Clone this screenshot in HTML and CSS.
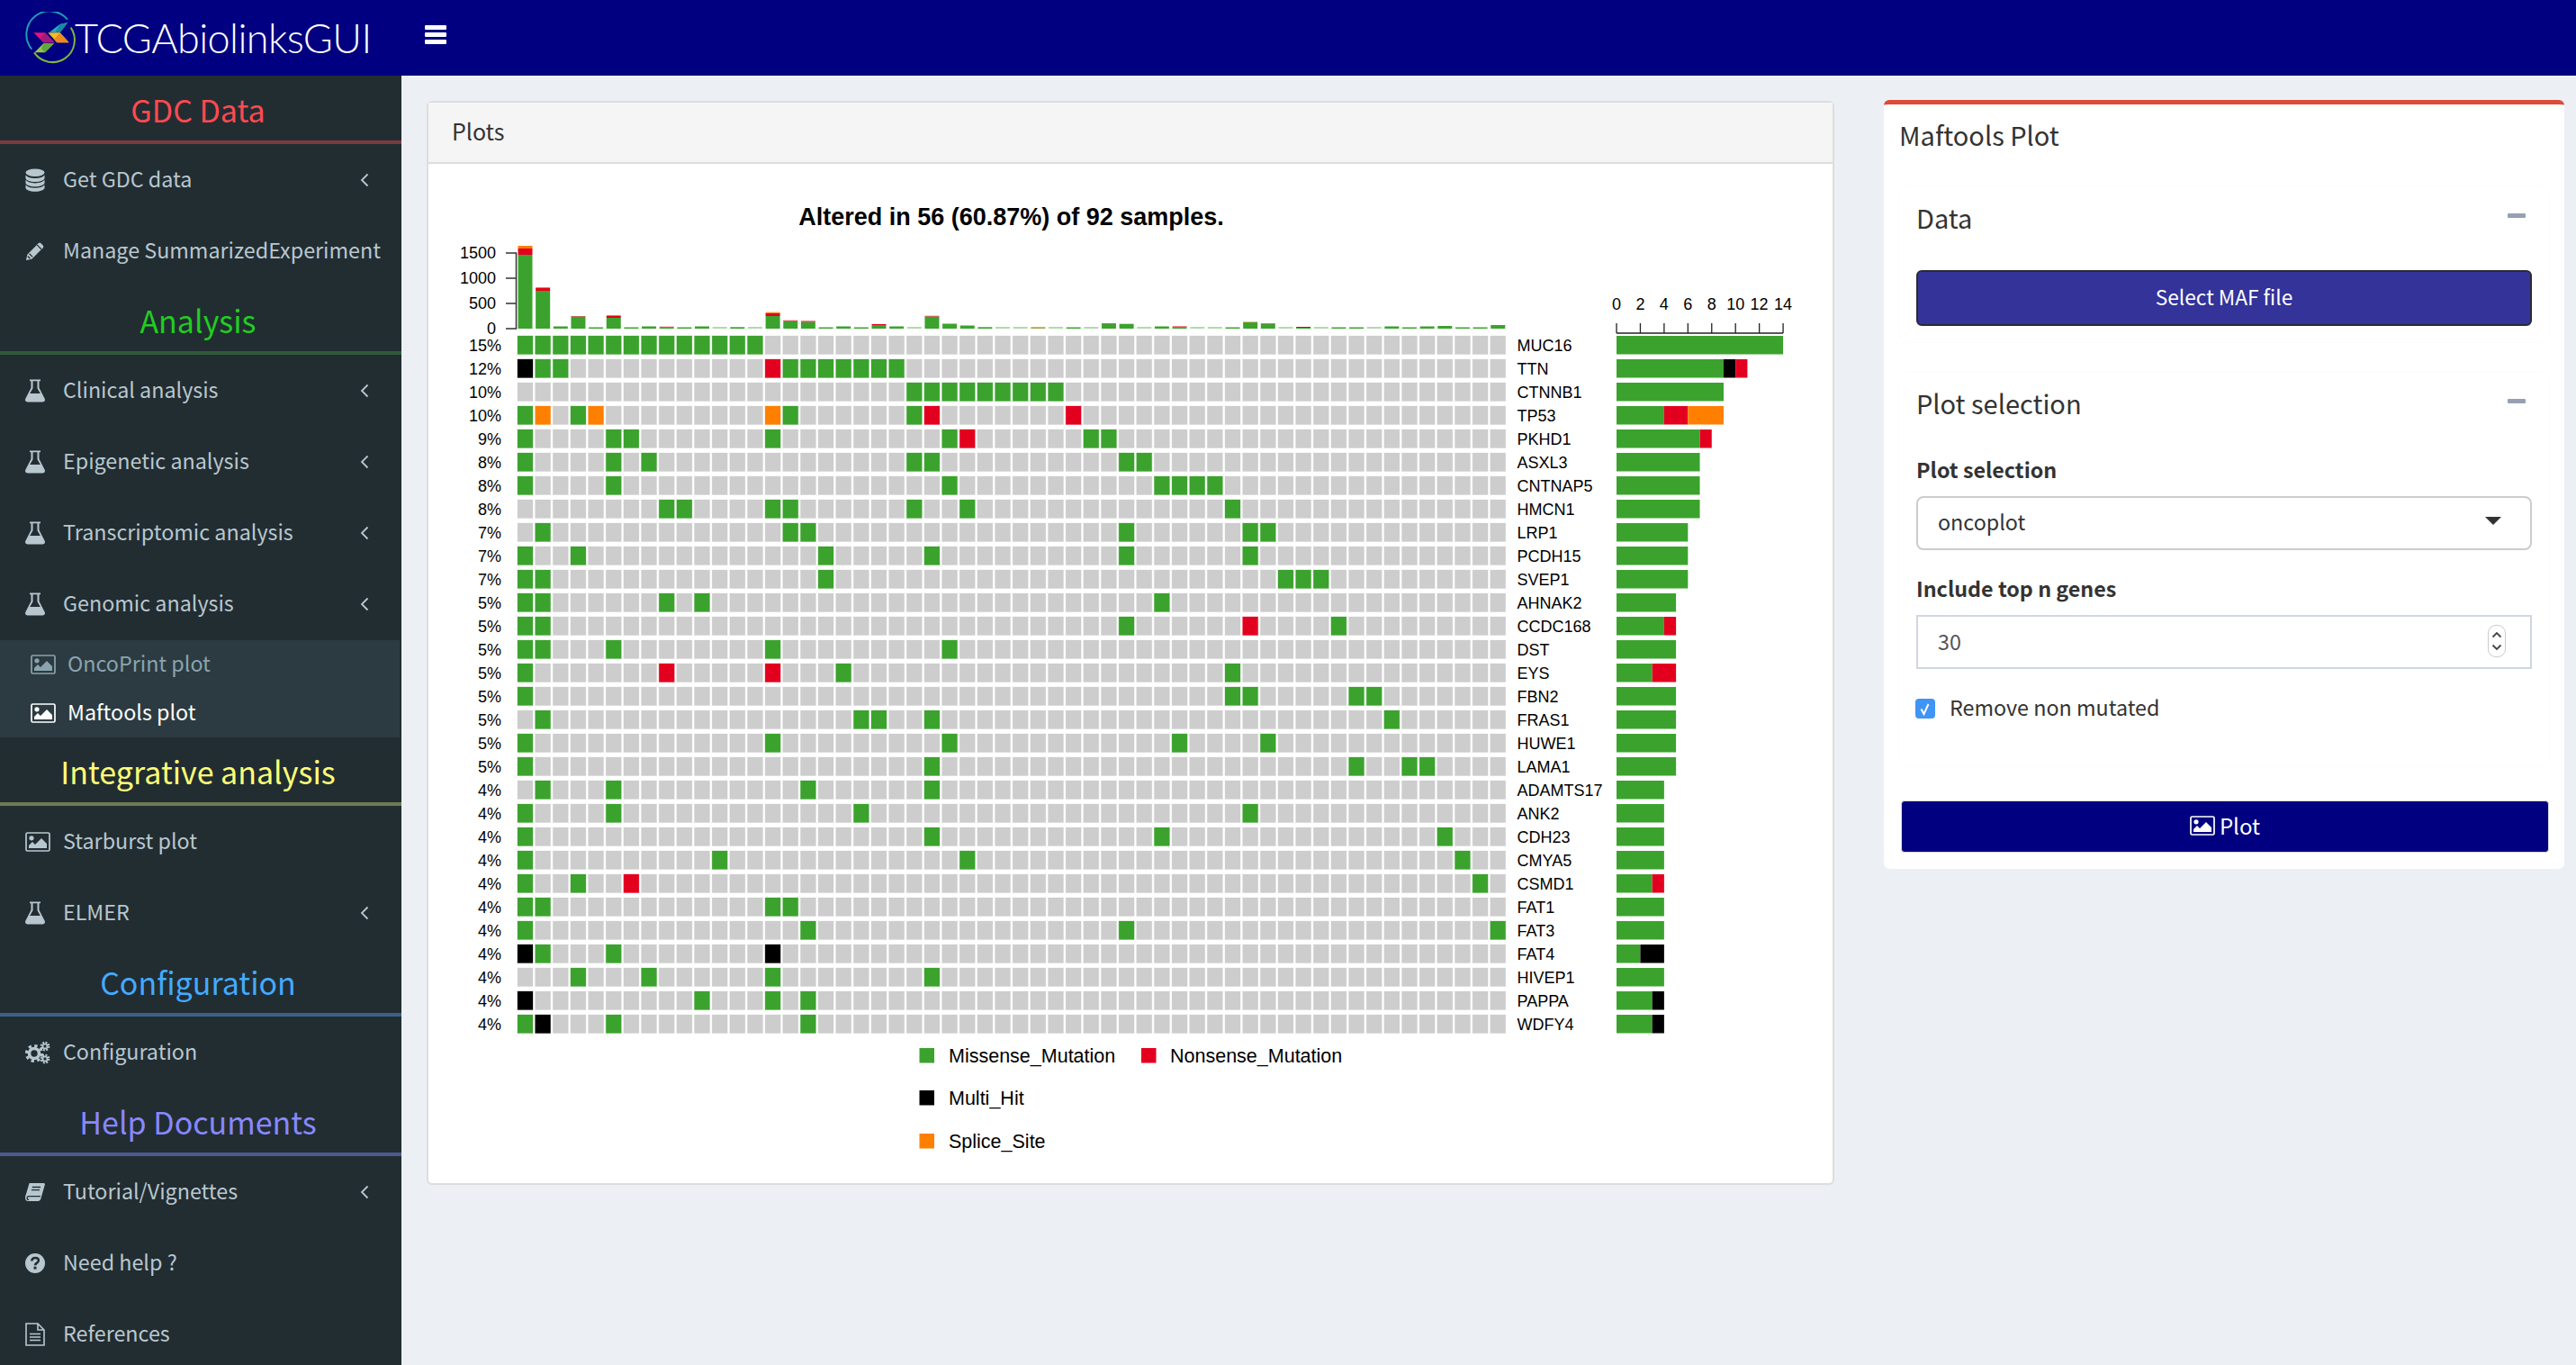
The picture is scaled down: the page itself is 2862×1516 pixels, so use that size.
FILE: index.html
```html
<!DOCTYPE html>
<html lang="en">

<head>
    <meta charset="UTF-8">
    <title>TCGAbiolinksGUI</title>
    <link rel="stylesheet" href="styles.css">
</head>

<body>
    <svg class="defs" width="0" height="0">
        <symbol id="i-database" viewBox="0 0 24 28">
            <ellipse cx="12" cy="5" rx="11.5" ry="4.6" />
            <path id="disc" d="M.5 8v3.6c0 2.5 5 4.6 11.5 4.6s11.5-2.1 11.5-4.6V8c-2 2.6-6.500 3.900-11.500 3.900S2.500 10.600.5 8z" />
            <use href="#disc" y="5.800" />
            <use href="#disc" y="11.600" />
        </symbol>
        <symbol id="i-pencil" viewBox="0 0 24 24">
            <path d="M1 23l1.500-7L16 2.500q1.500-1.500 3 0l2.500 2.500q1.500 1.500 0 3L8 21.500z" />
            <path d="M5 15l4 4M14.500 4.500l5 5M3 18l3 3" fill="none" stroke="#222d32" stroke-width="1.300" />
        </symbol>
        <symbol id="i-flask" viewBox="0 0 22 25">
            <path fill-rule="evenodd" d="M5 0h12v1.800h-1.500v7.400l6.300 12.300q.9 3.100-2.300 3.500H2.500q-3.200-.4-2.300-3.500L6.500 9.200V1.800H5zM8.500 1.800v8L5.200 15.500h11.600L13.500 9.800v-8z" />
        </symbol>
        <symbol id="i-picture" viewBox="0 0 28 22">
            <rect x="1" y="1" width="26" height="20" rx="1.500" fill="none" stroke="currentColor" stroke-width="1.700" />
            <circle cx="7" cy="6.800" r="2.600" />
            <path d="M4 18v-3l4-4 3 3 7-7 6 6v5z" />
        </symbol>
        <symbol id="i-cogs" viewBox="0 0 28 26">
            <g fill="none" stroke="currentColor">
                <circle cx="10" cy="14" r="5.500" stroke-width="3.600" />
                <circle cx="10" cy="14" r="8.600" stroke-width="3" stroke-dasharray="3.400 3.350" />
                <circle cx="22" cy="6" r="2.600" stroke-width="1.900" />
                <circle cx="22" cy="6" r="4.400" stroke-width="2" stroke-dasharray="2 1.450" />
                <circle cx="22" cy="20" r="2.600" stroke-width="1.900" />
                <circle cx="22" cy="20" r="4.400" stroke-width="2" stroke-dasharray="2 1.450" />
            </g>
        </symbol>
        <symbol id="i-book" viewBox="0 0 24 22">
            <path d="M5 0h18l1 1.500L19 19q-.6 3-3 3H3.500Q0 22 0 17.500q0-1 .5-2.500z" />
            <path d="M8.500 5h10M7.500 8.500h10M18.500 16H4.500q-2.200 0-2.200 2.200t2.200 2" fill="none" stroke="#222d32" stroke-width="1.400" />
        </symbol>
        <symbol id="i-help" viewBox="0 0 24 24">
            <circle cx="12" cy="12" r="12" />
            <path d="M8 9.200q0-3.700 4.200-3.700t4 3.300c0 2.800-4.200 2.700-4.200 5.700" fill="none" stroke="#222d32" stroke-width="2.800" />
            <rect x="10.400" y="16" width="3.200" height="3.200" fill="#222d32" />
        </symbol>
        <symbol id="i-file" viewBox="0 0 22 26">
            <g fill="none" stroke="currentColor" stroke-width="1.600">
                <path d="M1 1h13l7 7v17H1zM14 1v7h7" />
                <path d="M5 12.500h12M5 16h12M5 19.500h12" />
            </g>
        </symbol>
        <symbol id="i-angle" viewBox="0 0 10 16">
            <path d="M8.500 1.500L2 8l6.500 6.500" fill="none" stroke="currentColor" stroke-width="1.800" />
        </symbol>
    </svg>

    <header class="topbar">
        <a class="brand">
            <svg class="brand-logo" viewBox="84 42 180 180">
                <path d="M225 68A72 72 0 1 0 106 167" fill="none" stroke="#1f9cb5" stroke-width="6" />
                <path d="M236 95A72 72 0 0 1 114 178" fill="none" stroke="#7fb63e" stroke-width="6" />
                <path d="M165 110l34-26 27-6-26 34z" fill="#2aa9c6" />
                <path d="M199 84l27-6-26 34h-16z" fill="#178a9f" />
                <path d="M160 112h40l30 33h-40z" fill="#f7bd1c" />
                <path d="M200 112l30 33h-40l-10-11z" fill="#ee8a20" />
                <path d="M112 112h38l32 33h-37z" fill="#e4137c" />
                <path d="M150 112l32 33h-37l-12-14z" fill="#a11c7a" />
                <path d="M115 178l30-30h35l-30 30z" fill="#93c64a" />
                <path d="M145 148h35l-30 30-12-13z" fill="#5fa63c" />
            </svg>
            <span class="brand-text">TCGAbiolinksGUI</span>
        </a>
        <div class="burger"><span></span><span></span><span></span></div>
    </header>

    <div class="page">
        <aside class="sidebar">
            <h2 class="side-head head-red">GDC Data</h2>
            <a class="item"><svg class="ico"><use href="#i-database" /></svg>Get GDC data<svg class="angle"><use href="#i-angle" /></svg></a>
            <a class="item"><svg class="ico"><use href="#i-pencil" /></svg>Manage SummarizedExperiment</a>

            <h2 class="side-head head-green">Analysis</h2>
            <a class="item"><svg class="ico"><use href="#i-flask" /></svg>Clinical analysis<svg class="angle"><use href="#i-angle" /></svg></a>
            <a class="item"><svg class="ico"><use href="#i-flask" /></svg>Epigenetic analysis<svg class="angle"><use href="#i-angle" /></svg></a>
            <a class="item"><svg class="ico"><use href="#i-flask" /></svg>Transcriptomic analysis<svg class="angle"><use href="#i-angle" /></svg></a>
            <a class="item"><svg class="ico"><use href="#i-flask" /></svg>Genomic analysis<svg class="angle"><use href="#i-angle" /></svg></a>
            <div class="submenu">
                <a class="subitem"><svg class="ico-pic"><use href="#i-picture" /></svg>OncoPrint plot</a>
                <a class="subitem active"><svg class="ico-pic"><use href="#i-picture" /></svg>Maftools plot</a>
            </div>

            <h2 class="side-head head-yellow">Integrative analysis</h2>
            <a class="item"><svg class="ico ico-wide"><use href="#i-picture" /></svg>Starburst plot</a>
            <a class="item"><svg class="ico"><use href="#i-flask" /></svg>ELMER<svg class="angle"><use href="#i-angle" /></svg></a>

            <h2 class="side-head head-blue">Configuration</h2>
            <a class="item"><svg class="ico ico-wide"><use href="#i-cogs" /></svg>Configuration</a>

            <h2 class="side-head head-violet">Help Documents</h2>
            <a class="item"><svg class="ico"><use href="#i-book" /></svg>Tutorial/Vignettes<svg class="angle"><use href="#i-angle" /></svg></a>
            <a class="item"><svg class="ico"><use href="#i-help" /></svg>Need help ?</a>
            <a class="item"><svg class="ico"><use href="#i-file" /></svg>References</a>
        </aside>

        <main class="content">
            <section class="panel">
                <div class="panel-head">Plots</div>
                <div class="panel-body">
                    <svg id="oncoplot" class="oncoplot" viewBox="476 182 1560 1132"></svg>
                </div>
            </section>

            <section class="box">
                <h3 class="box-title">Maftools Plot</h3>

                <div class="inner">
                    <div class="inner-head"><span>Data</span><i class="minus"></i></div>
                    <button class="btn-file">Select MAF file</button>
                </div>

                <div class="inner inner-form">
                    <div class="inner-head"><span>Plot selection</span><i class="minus"></i></div>

                    <label class="lbl">Plot selection</label>
                    <div class="select">oncoplot<i class="caret"></i></div>

                    <label class="lbl">Include top n genes</label>
                    <div class="number">30
                        <div class="spinner">
                            <svg width="12" height="8" viewBox="0 0 12 8"><path d="M1.500 6.500L6 2l4.500 4.500" /></svg>
                            <svg width="12" height="8" viewBox="0 0 12 8"><path d="M1.500 1.500L6 6l4.500-4.500" /></svg>
                        </div>
                    </div>

                    <div class="check-row">
                        <span class="check"><svg width="22" height="22" viewBox="0 0 22 22"><path d="M6.500 11.500l3 5.500 5-11" /></svg></span>
                        Remove non mutated
                    </div>
                </div>

                <button class="btn-plot"><svg class="ico-pic"><use href="#i-picture" /></svg>Plot</button>
            </section>
        </main>
    </div>

    <script src="plot.js"></script>
</body>

</html>
```

FILE: styles.css
```css
* {
    box-sizing: border-box;
    margin: 0;
    padding: 0;
}

html,
body {
    height: 100%;
    overflow: hidden;
}

body {
    background-color: #ecf0f5;
    color: #333;
    font-family: "Noto Sans CJK SC", "Open Sans", sans-serif;
    font-size: 23.300px;
}

.defs {
    position: absolute;
}

svg {
    fill: currentColor;
}

/* top bar */
.topbar {
    display: flex;
    align-items: center;
    height: 84px;
    background-color: #000080;
}

.brand {
    display: flex;
    align-items: center;
    width: 472px;
    padding-left: 28px;
}

.brand-logo {
    width: 60px;
    height: 60px;
    flex: none;
    margin-top: 2px;
}

.brand-text {
    margin-left: -5px;
    color: #fff;
    font-family: Lato, sans-serif;
    font-size: 45px;
    font-weight: 300;
    letter-spacing: -.6px;
}

.burger {
    display: flex;
    flex-direction: column;
    gap: 3px;
    width: 24px;
    margin-top: -8px;
}

.burger span {
    height: 5px;
    border-radius: 1px;
    background-color: #fff;
}

/* sidebar */
.page {
    display: flex;
}

.sidebar {
    width: 446px;
    height: 1432px;
    flex: none;
    overflow: hidden;
    background-color: #222d32;
    color: #b8c7ce;
}

.side-head {
    height: 76px;
    padding: 0 6px 4px 0;
    border-bottom: 4px solid;
    font-size: 34px;
    font-weight: 400;
    line-height: 76px;
    text-align: center;
}

.head-red {
    color: #ff4a50;
    border-color: #7b3a3e;
}

.head-green {
    color: #22cc22;
    border-color: #2d5a38;
}

.head-yellow {
    color: #ffff77;
    border-color: #6e7a55;
}

.head-blue {
    color: #44aaff;
    border-color: #3f5f88;
}

.head-violet {
    color: #8888ff;
    border-color: #4d5a90;
}

/* the font sits low in its line box, so text gets bottom padding and icons a top margin */
.item {
    display: flex;
    align-items: center;
    height: 79px;
    padding: 0 0 4px 28px;
    line-height: 40px;
    white-space: nowrap;
}

.ico {
    width: 22px;
    height: 26px;
    flex: none;
    margin: 4px 20px 0 0;
}

.ico-wide {
    width: 28px;
    margin-right: 14px;
}

.angle {
    width: 10px;
    height: 16px;
    margin: 4px 36px 0 auto;
}

.submenu {
    width: 444px;
    margin-top: 1px;
    background-color: #2c3b41;
}

.subitem {
    display: flex;
    align-items: center;
    height: 54px;
    padding: 0 0 4px 34px;
    color: #8aa4af;
}

.subitem.active {
    color: #fff;
}

.ico-pic {
    width: 28px;
    height: 22px;
    flex: none;
    margin: 4px 13px 0 0;
}

/* main area */
.content {
    display: grid;
    grid-template-columns: 1564px 756px;
    column-gap: 55px;
    align-items: start;
    padding: 28px 13px 0 28px;
}

.panel {
    border: 2px solid #ddd;
    border-radius: 6px;
    background-color: #fff;
}

.panel-head {
    height: 68px;
    padding-left: 26px;
    border-bottom: 2px solid #ddd;
    background-color: #f5f5f5;
    font-size: 25px;
    line-height: 62px;
}

.oncoplot {
    display: block;
    width: 1560px;
    height: 1132px;
    font-family: "Liberation Sans", Arial, sans-serif;
}

.box {
    margin-top: -1px;
    padding: 0 17px 18px;
    border-top: 5px solid #dd4b39;
    border-radius: 6px;
    background-color: #fff;
}

.box-title {
    margin-bottom: 25px;
    font-size: 29px;
    font-weight: 400;
    line-height: 66px;
}

.inner {
    padding: 0 19px 18px;
    border-radius: 12px;
    box-shadow: 0 0 0 1px #fcfcfc;
}

.inner-form {
    margin-top: 33px;
    padding-bottom: 44px;
}

.inner-head {
    display: flex;
    justify-content: space-between;
    margin-bottom: 25px;
    font-size: 29px;
    line-height: 68px;
}

.inner-form .inner-head {
    margin-bottom: 22px;
}

.minus {
    width: 20px;
    height: 5px;
    margin: 30px 7px 0 0;
    border-radius: 1px;
    background-color: #97a0b3;
}

.btn-file {
    display: block;
    width: 100%;
    height: 62px;
    padding-bottom: 3px;
    border: 2px solid #2a2a35;
    border-radius: 6px;
    background-color: #333399;
    color: #fff;
    font: inherit;
    font-size: 22.700px;
}

.lbl {
    display: block;
    margin-bottom: 11px;
    font-weight: 700;
    line-height: 37px;
}

.select {
    display: flex;
    align-items: center;
    justify-content: space-between;
    height: 60px;
    margin-bottom: 24px;
    padding: 0 32px 4px 22px;
    border: 2px solid #ccc;
    border-radius: 8px;
}

.caret {
    width: 0;
    height: 0;
    margin-top: -1px;
    border-top: 9px solid #333;
    border-left: 9px solid transparent;
    border-right: 9px solid transparent;
}

.number {
    display: flex;
    align-items: center;
    justify-content: space-between;
    height: 60px;
    margin-bottom: 24px;
    padding: 0 27px 3px 22px;
    border: 2px solid #d2d6de;
    color: #555;
}

.spinner {
    display: flex;
    flex-direction: column;
    align-items: center;
    justify-content: space-evenly;
    width: 20px;
    height: 36px;
    border: 1px solid #ccc;
    border-radius: 9px;
}

.spinner path {
    fill: none;
    stroke: #444;
    stroke-width: 1.800;
}

.check-row {
    display: flex;
    align-items: center;
    height: 40px;
    padding-bottom: 4px;
    gap: 16px;
}

.check {
    width: 22px;
    height: 22px;
    margin: 4px 0 0 -1px;
    border-radius: 4px;
    background-color: #3f94f5;
}

.check svg {
    display: block;
    fill: none;
    stroke: #fff;
    stroke-width: 2;
}

.btn-plot {
    display: flex;
    align-items: center;
    justify-content: center;
    width: calc(100% - 2px);
    height: 58px;
    margin: 38px 0 0 2px;
    padding-bottom: 4px;
    border: 1px solid #ddd;
    border-radius: 4px;
    background-color: #000080;
    color: #fff;
    font: inherit;
    font-size: 24px;
}

.btn-plot .ico-pic {
    margin: 1px 5px 0 0;
}
```

FILE: plot.js
```js
// oncoplot data: gene, percent, then sample columns per mutation class
let rows = [
    ['MUC16', '15%', [0,1,2,3,4,5,6,7,8,9,10,11,12,13]],
    ['TTN', '12%', [1,2,15,16,17,18,19,20,21], [14], [0]],
    ['CTNNB1', '10%', [22,23,24,25,26,27,28,29,30]],
    ['TP53', '10%', [0,3,15,22], [23,31], [], [1,4,14]],
    ['PKHD1', '9%', [0,5,6,14,24,32,33], [25]],
    ['ASXL3', '8%', [0,5,7,22,23,34,35]],
    ['CNTNAP5', '8%', [0,5,24,36,37,38,39]],
    ['HMCN1', '8%', [8,9,14,15,22,25,40]],
    ['LRP1', '7%', [1,15,16,34,41,42]],
    ['PCDH15', '7%', [0,3,17,23,34,41]],
    ['SVEP1', '7%', [0,1,17,43,44,45]],
    ['AHNAK2', '5%', [0,1,8,10,36]],
    ['CCDC168', '5%', [0,1,34,46], [41]],
    ['DST', '5%', [0,1,5,14,24]],
    ['EYS', '5%', [0,18,40], [8,14]],
    ['FBN2', '5%', [0,40,41,47,48]],
    ['FRAS1', '5%', [1,19,20,23,49]],
    ['HUWE1', '5%', [0,14,24,37,42]],
    ['LAMA1', '5%', [0,23,47,50,51]],
    ['ADAMTS17', '4%', [1,5,16,23]],
    ['ANK2', '4%', [0,5,19,41]],
    ['CDH23', '4%', [0,23,36,52]],
    ['CMYA5', '4%', [0,11,25,53]],
    ['CSMD1', '4%', [0,3,54], [6]],
    ['FAT1', '4%', [0,1,14,15]],
    ['FAT3', '4%', [0,16,34,55]],
    ['FAT4', '4%', [1,5], [], [0,14]],
    ['HIVEP1', '4%', [3,7,14,23]],
    ['PAPPA', '4%', [10,14,16], [], [0]],
    ['WDFY4', '4%', [0,5,16], [], [1]]
];

// top bar heights in px: green, red, orange (1 alone = pale stub)
let tmb = [
    [82,7,3],[42,3,1],[2.500],[13.500,.500],[1.500],[12,2,1],[1.500],[2.500],
    [1.500,.700],[1.500],[2.500],[1],[1.700],[1],[14,3.300,1],[8.500,.700],
    [7.500,1],[1.500],[2.500],[1.500],[4,1],[2.500],[1],[13.500,.700],
    [5.500],[3.500],[1.700],[1],[1],[.700,0,1],[1],[1.500],
    [1],[5.500,.500],[5.300],[1],[2.500],[1.500,1],[1],[1],
    [1.500],[7,0,.500],[5.300,.500],[1],[1,1],[1],[1.500],[1.500],
    [1],[2.500],[1.500],[2.500],[3],[1.500],[1.500],[4]
];

const GREEN = '#3ba32d', RED = '#e3001f', ORANGE = '#ff7f00', BLACK = '#000', GREY = '#cdcdcd';
const COL_X = 575, COL_W = 19.65, CELL_W = 17;
const ROW_Y = 373, ROW_H = 26, CELL_H = 20.5;
const BASE_Y = 365, BAR_X = 1796, UNIT = 13.22;

let svg = document.getElementById('oncoplot');

function add(tag, attrs, text) {
    let el = document.createElementNS('http://www.w3.org/2000/svg', tag);
    for (let k in attrs) el.setAttribute(k, attrs[k]);
    if (text !== undefined) el.textContent = text;
    svg.appendChild(el);
}

function rect(x, y, w, h, fill, extra) {
    add('rect', Object.assign({ x, y, width: w, height: h, fill }, extra));
}

function label(x, y, str, size, anchor, weight) {
    add('text', {
        x, y, 'font-size': size, 'text-anchor': anchor || 'start',
        'font-weight': weight || 'normal', 'dominant-baseline': 'central', fill: '#000'
    }, str);
}

label(1123.500, 241, 'Altered in 56 (60.87%) of 92 samples.', 27, 'middle', 'bold');

// top bar chart
tmb.forEach((col, i) => {
    let x = COL_X + i * COL_W + .500;
    let y = BASE_Y;
    if (col.length === 1 && col[0] === 1) {
        rect(x, y - 2, 16, 2, GREEN, { opacity: .4 });
        return;
    }
    [GREEN, RED, ORANGE].forEach((c, k) => {
        if (!col[k]) return;
        y -= col[k];
        rect(x, y, 16, col[k], c);
    });
});

// y axis of top bar chart
add('path', { d: 'M562 281H573.500V365H562M562 309H573.500M562 337H573.500', fill: 'none', stroke: '#333', 'stroke-width': 1.500 });
[[281, '1500'], [309, '1000'], [337, '500'], [365, '0']].forEach(t => label(551, t[0], t[1], 18, 'end'));

// matrix and side bars
rows.forEach((r, ri) => {
    let y = ROW_Y + ri * ROW_H;
    let classes = [[r[2] || [], GREEN], [r[4] || [], BLACK], [r[3] || [], RED], [r[5] || [], ORANGE]];
    let color = {};
    classes.forEach(c => c[0].forEach(s => { color[s] = c[1]; }));

    for (let s = 0; s < 56; s++) {
        let fill = color[s] || GREY;
        rect(COL_X + s * COL_W, y, CELL_W, CELL_H, fill, {
            stroke: fill, 'stroke-opacity': .3, 'stroke-width': 1
        });
    }

    label(557, y + CELL_H / 2 + 1, r[1], 18, 'end');
    label(1685.500, y + CELL_H / 2 + 1, r[0], 18);

    let x = BAR_X;
    classes.forEach(c => {
        if (!c[0].length) return;
        let w = c[0].length * UNIT;
        rect(x, y, w, CELL_H, c[1]);
        x += w;
    });
});

// axis of side bars
let ticks = 'M' + BAR_X + ' 370H1981';
for (let n = 0; n <= 14; n += 2) {
    let x = BAR_X + n * UNIT;
    ticks += 'M' + x + ' 359V370';
    label(x, 338, String(n), 18, 'middle');
}
add('path', { d: ticks, fill: 'none', stroke: '#222', 'stroke-width': 1.300 });

// legend
[
    [1021.500, 1164, GREEN, 1054, 'Missense_Mutation'],
    [1268, 1164, RED, 1300, 'Nonsense_Mutation'],
    [1021.500, 1211, BLACK, 1054, 'Multi_Hit'],
    [1021.500, 1259, ORANGE, 1054, 'Splice_Site']
].forEach(l => {
    rect(l[0], l[1], 16.500, 16.500, l[2]);
    label(l[3], l[1] + 9, l[4], 21.500);
});
```
